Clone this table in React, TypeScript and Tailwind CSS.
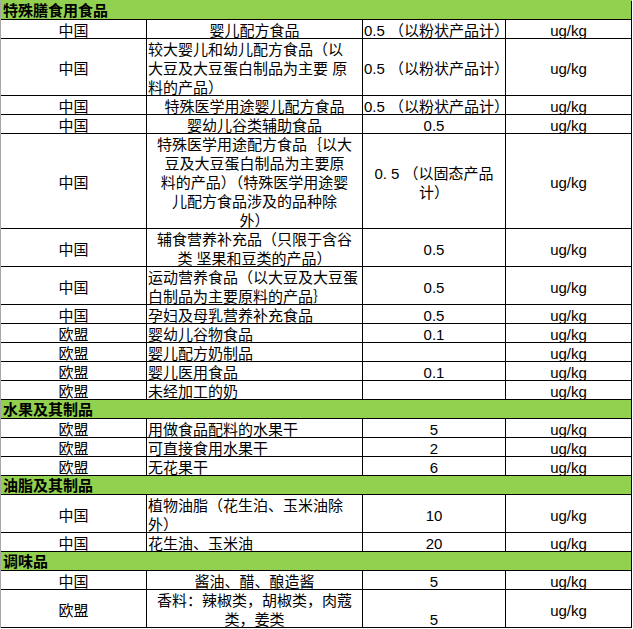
import React from "react";

type Align = "left" | "center";
type Section = { kind: "section"; title: string };
type Item = {
  kind: "item";
  lines: number;
  region: string;
  food: string[];
  foodAlign: Align;
  limit: string[];
  limitAlign: Align;
  limitBottom?: boolean;
};
type Row = Section | Item;

const rows: Row[] = [
  { kind: "section", title: "特殊膳食用食品" },
  { kind: "item", lines: 1, region: "中国", food: ["婴儿配方食品"], foodAlign: "center", limit: ["0.5 （以粉状产品计）"], limitAlign: "left" },
  { kind: "item", lines: 3, region: "中国", food: ["较大婴儿和幼儿配方食品（以", "大豆及大豆蛋白制品为主要 原", "料的产品）"], foodAlign: "left", limit: ["0.5 （以粉状产品计）"], limitAlign: "left" },
  { kind: "item", lines: 1, region: "中国", food: ["特殊医学用途婴儿配方食品"], foodAlign: "center", limit: ["0.5 （以粉状产品计）"], limitAlign: "left" },
  { kind: "item", lines: 1, region: "中国", food: ["婴幼儿谷类辅助食品"], foodAlign: "center", limit: ["0.5"], limitAlign: "center" },
  { kind: "item", lines: 5, region: "中国", food: ["特殊医学用途配方食品｛以大", "豆及大豆蛋白制品为主要原", "料的产品）（特殊医学用途婴", "儿配方食品涉及的品种除", "外）"], foodAlign: "center", limit: ["0. 5 （以固态产品", "计）"], limitAlign: "center" },
  { kind: "item", lines: 2, region: "中国", food: ["辅食营养补充品（只限于含谷", "类 坚果和豆类的产品）"], foodAlign: "center", limit: ["0.5"], limitAlign: "center" },
  { kind: "item", lines: 2, region: "中国", food: ["运动营养食品（以大豆及大豆蛋", "白制品为主要原料的产品｝"], foodAlign: "left", limit: ["0.5"], limitAlign: "center" },
  { kind: "item", lines: 1, region: "中国", food: ["孕妇及母乳营养补充食品"], foodAlign: "left", limit: ["0.5"], limitAlign: "center" },
  { kind: "item", lines: 1, region: "欧盟", food: ["婴幼儿谷物食品"], foodAlign: "left", limit: ["0.1"], limitAlign: "center" },
  { kind: "item", lines: 1, region: "欧盟", food: ["婴儿配方奶制品"], foodAlign: "left", limit: [""], limitAlign: "center" },
  { kind: "item", lines: 1, region: "欧盟", food: ["婴儿医用食品"], foodAlign: "left", limit: ["0.1"], limitAlign: "center" },
  { kind: "item", lines: 1, region: "欧盟", food: ["未经加工的奶"], foodAlign: "left", limit: [""], limitAlign: "center" },
  { kind: "section", title: "水果及其制品" },
  { kind: "item", lines: 1, region: "欧盟", food: ["用做食品配料的水果干"], foodAlign: "left", limit: ["5"], limitAlign: "center" },
  { kind: "item", lines: 1, region: "欧盟", food: ["可直接食用水果干"], foodAlign: "left", limit: ["2"], limitAlign: "center" },
  { kind: "item", lines: 1, region: "欧盟", food: ["无花果干"], foodAlign: "left", limit: ["6"], limitAlign: "center" },
  { kind: "section", title: "油脂及其制品" },
  { kind: "item", lines: 2, region: "中国", food: ["植物油脂（花生泊、玉米油除", "外）"], foodAlign: "left", limit: ["10"], limitAlign: "center" },
  { kind: "item", lines: 1, region: "中国", food: ["花生油、玉米油"], foodAlign: "left", limit: ["20"], limitAlign: "center" },
  { kind: "section", title: "调味品" },
  { kind: "item", lines: 1, region: "中国", food: ["酱油、醋、酿造酱"], foodAlign: "center", limit: ["5"], limitAlign: "center" },
  { kind: "item", lines: 2, region: "欧盟", food: ["香料：辣椒类，胡椒类，肉蔻", "类，姜类"], foodAlign: "center", limit: ["5"], limitAlign: "center", limitBottom: true },
];

const heights: Record<number, string> = { 1: "h-[19px]", 2: "h-[38px]", 3: "h-[57px]", 5: "h-[95px]" };

function Cell({ lines, align, bottom }: { lines: string[]; align: Align; bottom?: boolean }) {
  return (
    <div
      className={`flex flex-col overflow-visible border-r border-black ${bottom ? "justify-end" : "justify-center"} ${
        align === "left" ? "items-start pl-px" : "items-center"
      }`}
    >
      <div className={`translate-y-px ${align === "left" ? "text-left" : "text-center"}`}>
        {lines.map((l, i) => (
          <div key={i} className="whitespace-pre leading-[19px]">
            {l || "\u00a0"}
          </div>
        ))}
      </div>
    </div>
  );
}

export default function App() {
  return (
    <div
      className="w-[632px] bg-white text-[15px] text-black"
      style={{ fontFamily: "'Liberation Sans', 'Noto Sans CJK SC', sans-serif" }}
    >
      <div className="border-l border-[#a6a6a6] border-t border-t-[#92d050]">
        {rows.map((r, i) =>
          r.kind === "section" ? (
            <div key={i} className="flex h-[19px] items-center border-r border-b border-black bg-[#92d050] pl-[2px]">
              <span className="translate-y-px font-bold leading-[18px]">{r.title}</span>
            </div>
          ) : (
            <div key={i} className={`grid grid-cols-[146px_216px_143px_126px] border-b border-black ${heights[r.lines]}`}>
              <Cell lines={[r.region]} align="center" />
              <Cell lines={r.food} align={r.foodAlign} />
              <Cell lines={r.limit} align={r.limitAlign} bottom={r.limitBottom} />
              <Cell lines={["ug/kg"]} align="center" />
            </div>
          )
        )}
      </div>
    </div>
  );
}
